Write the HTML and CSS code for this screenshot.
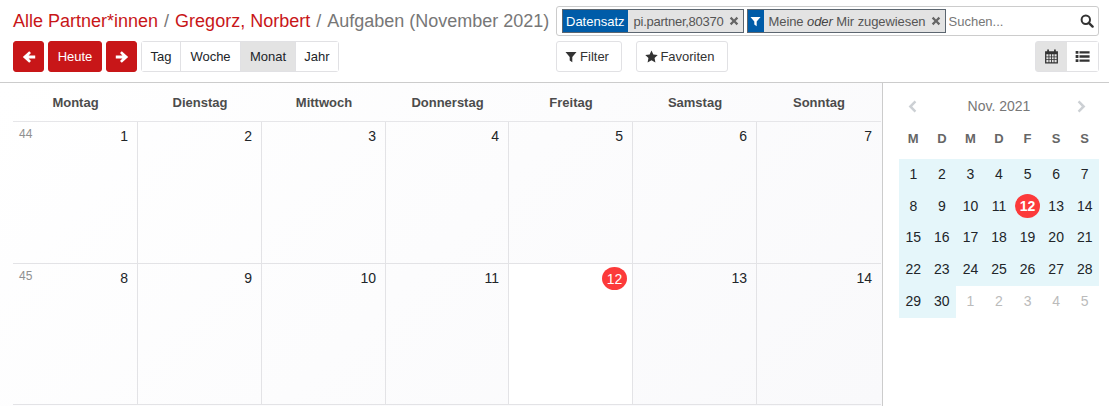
FILE: index.html
```html
<!DOCTYPE html>
<html lang="de">
<head>
    <meta charset="UTF-8">
    <title>Aufgaben (November 2021)</title>
    <link rel="stylesheet" href="styles.css">
</head>
<body>
<div class="controlPanel">
    <div class="panelLeft">
        <div class="breadcrumb">
            <a class="crumbLink">Alle Partner*innen</a>
            <span class="crumbSep">/</span>
            <a class="crumbLink">Gregorz, Norbert</a>
            <span class="crumbSep">/</span>
            <span class="crumbActive">Aufgaben (November 2021)</span>
        </div>
        <div class="toolRow">
            <button class="btnRed btnArrow" type="button">
                <svg class="icon" viewBox="0 0 14 14"><path d="M7.2 1.2 9 3 6.6 5.5H13.2V8.5H6.6L9 11 7.2 12.8.8 7Z"/></svg>
            </button>
            <button class="btnRed btnToday" type="button">Heute</button>
            <button class="btnRed btnArrow" type="button">
                <svg class="icon" viewBox="0 0 14 14"><path d="M6.8 1.2 5 3 7.4 5.5H.8V8.5H7.4L5 11 6.8 12.8 13.2 7Z"/></svg>
            </button>
            <div class="scaleGroup">
                <button class="scaleBtn scaleTag" type="button">Tag</button>
                <button class="scaleBtn scaleWoche" type="button">Woche</button>
                <button class="scaleBtn scaleMonat active" type="button">Monat</button>
                <button class="scaleBtn scaleJahr" type="button">Jahr</button>
            </div>
        </div>
    </div>
    <div class="panelRight">
        <div class="searchBox">
            <div class="facet">
                <span class="facetLabel">Datensatz</span>
                <span class="facetValue facetRecord">pi.partner,80370</span>
                <svg class="facetClose" viewBox="0 0 10 10"><path d="M2.4.8 5 3.4 7.6.8 9.2 2.4 6.6 5 9.2 7.6 7.6 9.2 5 6.6 2.4 9.2.8 7.6 3.4 5 .8 2.4Z"/></svg>
            </div>
            <div class="facet">
                <span class="facetLabel facetIcon">
                    <svg class="icon" viewBox="0 0 12 12"><path d="M.5 1H11.5L7.3 6V11.2L4.7 9.4V6Z"/></svg>
                </span>
                <span class="facetValue facetFilter">Meine <em>oder</em> Mir zugewiesen</span>
                <svg class="facetClose" viewBox="0 0 10 10"><path d="M2.4.8 5 3.4 7.6.8 9.2 2.4 6.6 5 9.2 7.6 7.6 9.2 5 6.6 2.4 9.2.8 7.6 3.4 5 .8 2.4Z"/></svg>
            </div>
            <input class="searchInput" type="text" placeholder="Suchen...">
            <svg class="searchIcon" viewBox="0 0 14 14"><circle cx="5.8" cy="5.8" r="4.2" fill="none" stroke="#333" stroke-width="2"/><path d="M8.8 8.8 12.6 12.6" stroke="#333" stroke-width="2.4" stroke-linecap="round"/></svg>
        </div>
        <div class="toolRow toolRowRight">
            <button class="btnPlain btnFilter" type="button">
                <svg class="icon" viewBox="0 0 12 12"><path d="M.5 1H11.5L7.3 6V11.2L4.7 9.4V6Z"/></svg>
                Filter
            </button>
            <button class="btnPlain btnFav" type="button">
                <svg class="icon" viewBox="0 0 14 14"><path d="M7 .6 9 4.8 13.7 5.4 10.3 8.6 11.2 13.4 7 11 2.8 13.4 3.7 8.6.3 5.4 5 4.8Z"/></svg>
                Favoriten
            </button>
            <div class="viewGroup">
                <button class="viewBtn active" type="button">
                    <svg class="icon" viewBox="0 0 14 14"><path fill-rule="evenodd" d="M3 .4H4.6V2H9.4V.4H11V2H13V13.6H1V2H3ZM2.2 5V6.9H4.2V5ZM5 5V6.9H6.6V5ZM7.4 5V6.9H9V5ZM9.8 5V6.9H11.8V5ZM2.2 7.6V9.4H4.2V7.6ZM5 7.6V9.4H6.6V7.6ZM7.4 7.6V9.4H9V7.6ZM9.8 7.6V9.4H11.8V7.6ZM2.2 10.1V12.4H4.2V10.1ZM5 10.1V12.4H6.6V10.1ZM7.4 10.1V12.4H9V10.1ZM9.8 10.1V12.4H11.8V10.1Z"/></svg>
                </button>
                <button class="viewBtn" type="button">
                    <svg class="icon" viewBox="0 0 14 14"><path d="M.6 1.8H3.2V4.4H.6ZM4.2 2H13.6V4.2H4.2ZM.6 5.7H3.2V8.3H.6ZM4.2 5.9H13.6V8.1H4.2ZM.6 9.6H3.2V12.2H.6ZM4.2 9.8H13.6V12H4.2Z"/></svg>
                </button>
            </div>
        </div>
    </div>
</div>

<div class="content">
    <div class="calendar">
        <div class="calHead">
            <div>Montag</div>
            <div>Dienstag</div>
            <div>Mittwoch</div>
            <div>Donnerstag</div>
            <div>Freitag</div>
            <div>Samstag</div>
            <div>Sonntag</div>
        </div>
        <div class="calBody">
            <div class="dayCell"><span class="weekNo">44</span><span class="dayNo">1</span></div>
            <div class="dayCell"><span class="dayNo">2</span></div>
            <div class="dayCell"><span class="dayNo">3</span></div>
            <div class="dayCell"><span class="dayNo">4</span></div>
            <div class="dayCell"><span class="dayNo">5</span></div>
            <div class="dayCell"><span class="dayNo">6</span></div>
            <div class="dayCell"><span class="dayNo">7</span></div>
            <div class="dayCell"><span class="weekNo">45</span><span class="dayNo">8</span></div>
            <div class="dayCell"><span class="dayNo">9</span></div>
            <div class="dayCell"><span class="dayNo">10</span></div>
            <div class="dayCell"><span class="dayNo">11</span></div>
            <div class="dayCell today"><span class="dayNo">12</span></div>
            <div class="dayCell"><span class="dayNo">13</span></div>
            <div class="dayCell"><span class="dayNo">14</span></div>
        </div>
    </div>
    <div class="sidebar">
        <div class="miniHead">
            <svg class="miniArrow" viewBox="0 0 10 14"><path d="M7.4 1.4 9 3 5.2 7 9 11 7.4 12.6 1.8 7Z"/></svg>
            <span class="miniTitle">Nov. 2021</span>
            <svg class="miniArrow" viewBox="0 0 10 14"><path d="M2.6 1.4 1 3 4.8 7 1 11 2.6 12.6 8.2 7Z"/></svg>
        </div>
        <div class="miniWeek">
            <div>M</div><div>D</div><div>M</div><div>D</div><div>F</div><div>S</div><div>S</div>
        </div>
        <div class="miniGrid">
            <div class="inMonth">1</div><div class="inMonth">2</div><div class="inMonth">3</div><div class="inMonth">4</div><div class="inMonth">5</div><div class="inMonth">6</div><div class="inMonth">7</div>
            <div class="inMonth">8</div><div class="inMonth">9</div><div class="inMonth">10</div><div class="inMonth">11</div><div class="inMonth"><span class="miniToday">12</span></div><div class="inMonth">13</div><div class="inMonth">14</div>
            <div class="inMonth">15</div><div class="inMonth">16</div><div class="inMonth">17</div><div class="inMonth">18</div><div class="inMonth">19</div><div class="inMonth">20</div><div class="inMonth">21</div>
            <div class="inMonth">22</div><div class="inMonth">23</div><div class="inMonth">24</div><div class="inMonth">25</div><div class="inMonth">26</div><div class="inMonth">27</div><div class="inMonth">28</div>
            <div class="inMonth">29</div><div class="inMonth">30</div><div class="otherMonth">1</div><div class="otherMonth">2</div><div class="otherMonth">3</div><div class="otherMonth">4</div><div class="otherMonth">5</div>
        </div>
    </div>
</div>
</body>
</html>
```

FILE: styles.css
```css
* {
    box-sizing: border-box;
}

html, body {
    height: 100%;
}

body {
    margin: 0;
    overflow: hidden;
    background: #fff;
    color: #212529;
    font-family: "Liberation Sans", Arial, sans-serif;
    font-size: 13px;
}

button {
    font-family: inherit;
    font-size: 13px;
    cursor: pointer;
}

.icon {
    display: block;
    fill: currentColor;
}

/* control panel */
.controlPanel {
    display: flex;
    height: 83px;
    padding: 6px 10px 0 13px;
    border-bottom: 1px solid #ccc;
}

.panelLeft {
    width: 543px;
}

.panelRight {
    width: 543px;
}

.breadcrumb {
    display: flex;
    gap: 6px;
    height: 30px;
    margin-bottom: 5px;
    align-items: center;
    font-size: 18px;
    white-space: nowrap;
}

.crumbLink {
    color: #c81618;
}

.crumbSep, .crumbActive {
    color: #777;
}

.toolRow {
    display: flex;
    height: 31px;
}

.btnRed {
    height: 31px;
    margin-right: 4px;
    padding: 0;
    border: 1px solid #c81618;
    border-radius: 3px;
    background: #c81618;
    color: #fff;
}

.btnArrow {
    display: flex;
    width: 31px;
    align-items: center;
    justify-content: center;
}

.btnArrow .icon {
    width: 14px;
    height: 14px;
}

.btnToday {
    width: 54px;
}

.scaleGroup {
    display: flex;
    border: 1px solid #e1e1e4;
    border-radius: 3px;
}

.scaleBtn {
    height: 100%;
    padding: 0;
    border: 0;
    border-right: 1px solid #e1e1e4;
    background: #fff;
    color: #212529;
}

.scaleBtn:last-child {
    border-right: 0;
}

.scaleBtn.active {
    background: #e3e3e3;
}

.scaleTag { width: 39px; }
.scaleWoche { width: 60px; }
.scaleMonat { width: 55px; }
.scaleJahr { width: 42px; }

/* search */
.searchBox {
    display: flex;
    height: 30px;
    margin-bottom: 5px;
    padding: 3px 4px 3px 5px;
    gap: 3px;
    align-items: center;
    border: 1px solid #ccc;
    border-radius: 3px;
}

.facet {
    display: flex;
    height: 24px;
    border: 1px solid #5c6670;
    background: #e3e3e3;
    color: #555;
    align-items: center;
    white-space: nowrap;
}

.facetLabel {
    display: flex;
    height: 100%;
    padding: 0 3px;
    align-items: center;
    background: #005ca8;
    color: #fff;
}

.facetIcon {
    width: 16px;
    justify-content: center;
    padding: 0;
}

.facetIcon .icon {
    width: 11px;
    height: 11px;
}

.facetValue {
    padding: 0 5px;
}

.facetRecord {
    padding-left: 6px;
    letter-spacing: -0.25px;
}

.facetFilter {
    letter-spacing: -0.08px;
}

.facetValue em {
    color: #444;
}

.facetClose {
    width: 10px;
    height: 10px;
    margin-right: 4px;
    fill: #666;
}

.searchInput {
    flex: 1;
    min-width: 0;
    height: 100%;
    padding: 0;
    border: 0;
    outline: none;
    font-family: inherit;
    font-size: 13px;
    color: #444;
}

.searchInput::placeholder {
    color: #777;
}

.searchIcon {
    width: 14px;
    height: 14px;
}

.toolRowRight {
    align-items: stretch;
}

.btnPlain {
    display: flex;
    gap: 3px;
    padding: 0 4px 0 0;
    align-items: center;
    justify-content: center;
    border: 1px solid #e1e1e4;
    border-radius: 3px;
    background: #fff;
    color: #333;
}

.btnPlain .icon {
    width: 12px;
    height: 12px;
}

.btnFav {
    gap: 2px;
}

.btnFav .icon {
    width: 13px;
    height: 13px;
}

.btnFilter {
    width: 66px;
    margin-right: 14px;
}

.btnFav {
    width: 92px;
}

.viewGroup {
    display: flex;
    margin-left: auto;
    border: 1px solid #e1e1e4;
    border-radius: 3px;
}

.viewBtn {
    display: flex;
    width: 31px;
    padding: 0;
    align-items: center;
    justify-content: center;
    border: 0;
    background: #fff;
    color: #333;
}

.viewBtn.active {
    background: #e3e3e3;
}

.viewBtn .icon {
    width: 15px;
    height: 15px;
}

/* month view */
.content {
    display: flex;
    height: 323px;
}

.calendar {
    width: 883px;
    padding: 0 1px 0 13px;
    border-right: 1px solid #ccc;
    background: linear-gradient(135deg, #fff, #f9f9fb);
}

.calHead, .calBody {
    display: grid;
    grid-template-columns: 125px 124px 124px 123px 124px 124px 124px;
}

.calHead {
    height: 39px;
    border-bottom: 1px solid #e6e6e9;
    font-weight: bold;
    font-size: 13px;
    color: #4c4c4c;
}

.calHead div {
    display: flex;
    align-items: center;
    justify-content: center;
}

.calBody {
    grid-template-rows: 142px 141px;
}

.dayCell {
    display: flex;
    padding: 6px 9px 0 6px;
    justify-content: flex-end;
    border-right: 1px solid #e3e3e6;
    border-bottom: 1px solid #e3e3e6;
    font-size: 14px;
}

.dayCell:nth-child(7n) {
    border-right: 0;
}

.weekNo {
    margin: -1px auto 0 0;
    color: #909090;
    font-size: 12px;
}

.today {
    background: #fff;
}

.today .dayNo {
    display: flex;
    width: 25px;
    height: 23px;
    margin: -3px -4px 0 0;
    align-items: center;
    justify-content: center;
    border-radius: 50%;
    background: #fc3a3a;
    color: #fff;
}

/* small calendar */
.sidebar {
    width: 226px;
    padding: 0 10px 0 16px;
}

.miniHead {
    display: flex;
    height: 47px;
    padding: 0 11px 0 7px;
    align-items: center;
    justify-content: space-between;
}

.miniArrow {
    width: 12px;
    height: 15px;
    fill: #ccd0d4;
}

.miniTitle {
    margin: -1px 0 0 4px;
    color: #777;
    font-size: 14px;
}

.miniWeek {
    display: grid;
    grid-template-columns: repeat(7, 1fr);
    height: 29px;
    color: #666;
    font-weight: bold;
    font-size: 13px;
    text-align: center;
    line-height: 18px;
}

.miniGrid {
    display: grid;
    grid-template-columns: repeat(7, 1fr);
    grid-auto-rows: 31.8px;
    font-size: 14px;
}

.miniGrid div {
    display: flex;
    padding-bottom: 2px;
    align-items: center;
    justify-content: center;
}

.inMonth {
    background: #e5f6fa;
}

.otherMonth {
    color: #bbb;
}

.miniToday {
    display: flex;
    width: 25px;
    height: 24px;
    align-items: center;
    justify-content: center;
    border-radius: 50%;
    background: #fc3a3a;
    color: #fff;
    font-weight: bold;
}
```
